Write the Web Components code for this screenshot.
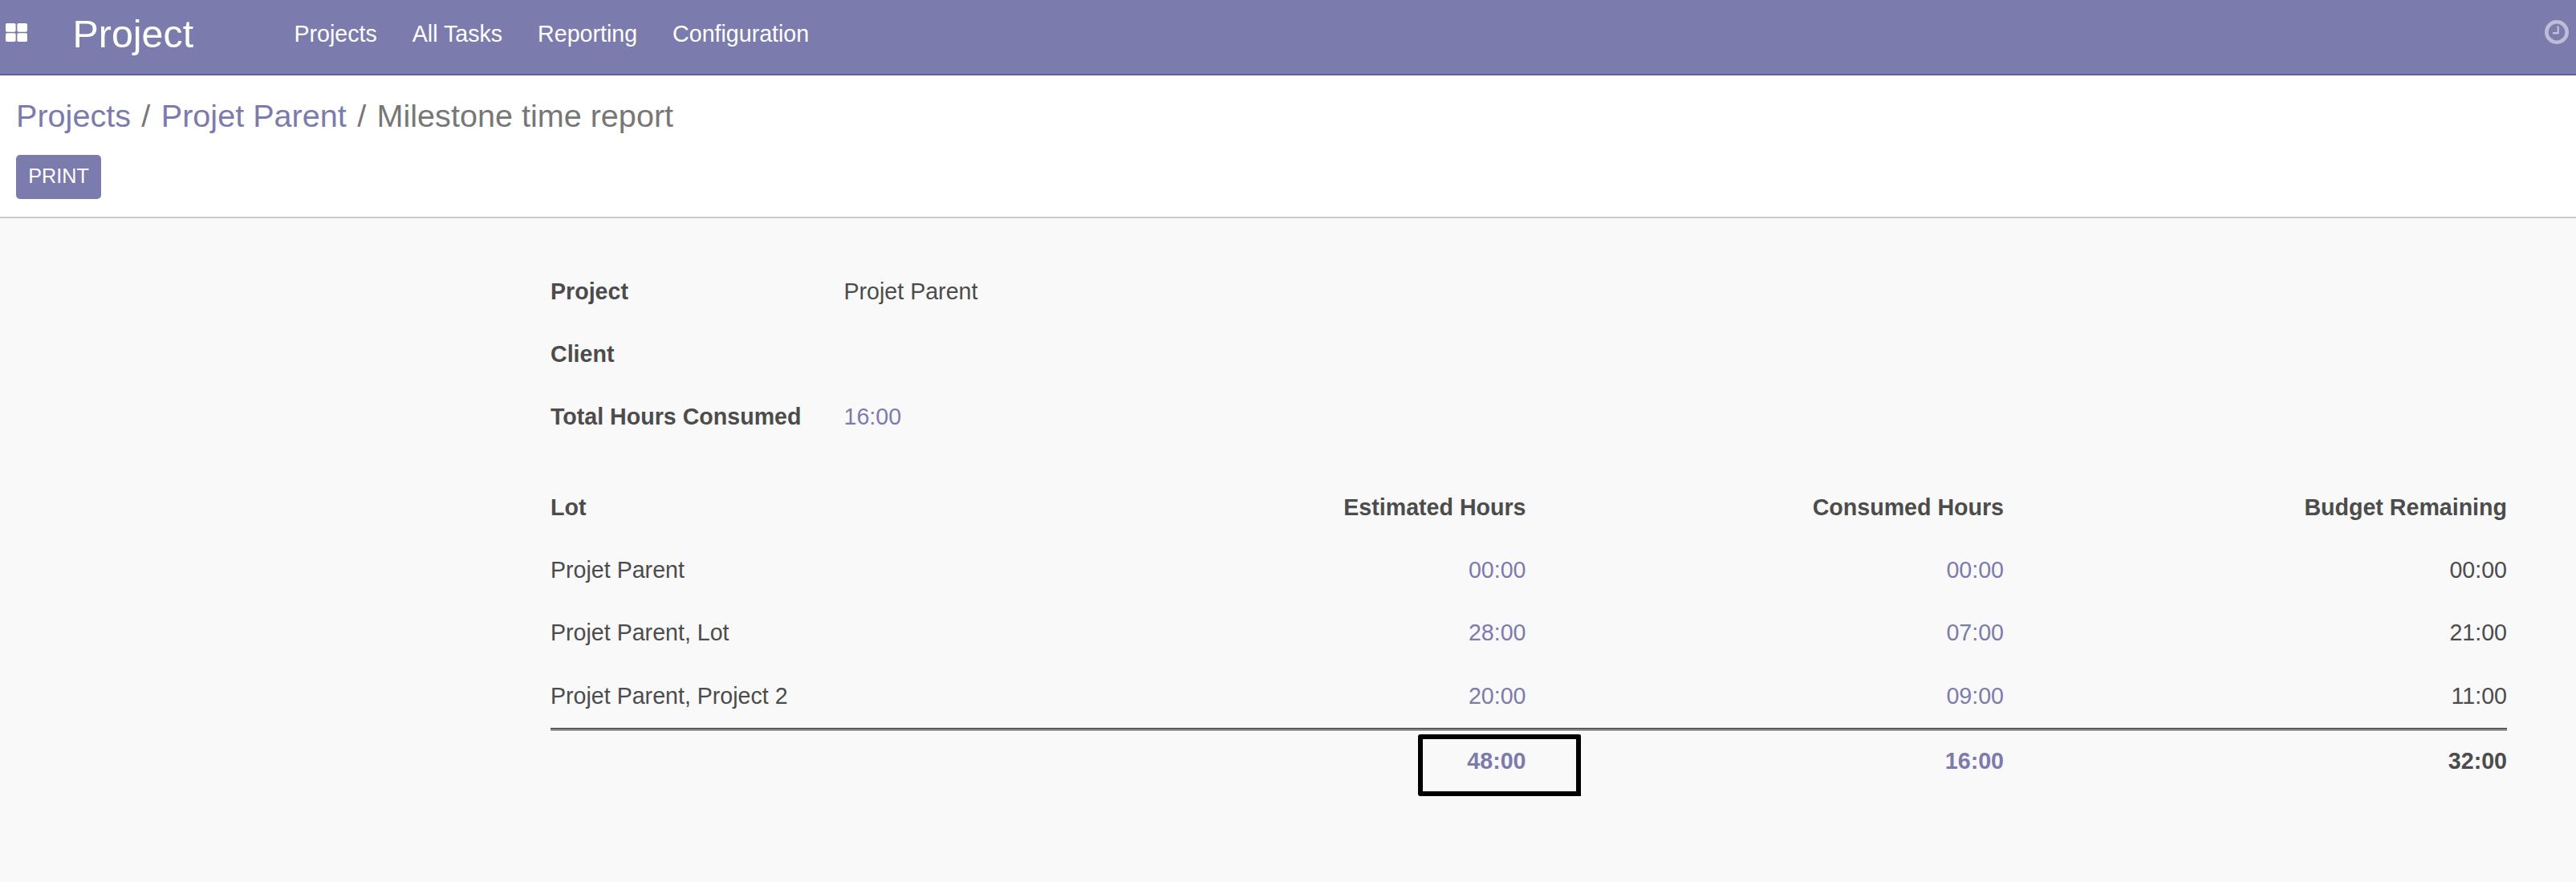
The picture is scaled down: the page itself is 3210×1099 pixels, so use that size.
<!DOCTYPE html>
<html lang="en">
<head>
<meta charset="utf-8">
<title>Milestone time report</title>
<style>
  html, body { margin: 0; height: 100%; }
  body { background: #f9f9f9; color: #4c4c4c; font: 28.6px/42px "Liberation Sans", Arial, sans-serif; overflow: hidden; }
</style>
</head>
<body>
<report-app></report-app>
<script>
const define = (name, html) => {
  const template = document.createElement('template');
  template.innerHTML = html;
  customElements.define(name, class extends HTMLElement {
    constructor() {
      super();
      this.attachShadow({ mode: 'open' }).append(template.content.cloneNode(true));
    }
  });
};

define('apps-icon', `
<style>:host{display:block;width:27px;height:23px}svg{display:block}</style>
<svg width="27" height="23" fill="#fff"><rect width="12.6" height="10.8" rx="1.8"/><rect x="14.4" width="12.6" height="10.8" rx="1.8"/><rect y="12.2" width="12.6" height="10.8" rx="1.8"/><rect x="14.4" y="12.2" width="12.6" height="10.8" rx="1.8"/></svg>`);

define('clock-icon', `
<style>:host{display:block;width:30px;height:30px}svg{display:block}</style>
<svg width="30" height="30" fill="none" stroke="#bebdd6"><circle cx="15" cy="15" r="12.7" stroke-width="4.6"/><path d="M16.7 7.5V16.2H10" stroke-width="2.4" stroke-linejoin="round"/></svg>`);

define('nav-bar', `
<style>
:host{display:flex;align-items:flex-start;box-sizing:border-box;height:94px;background:#7c7bad;border-bottom:2px solid #5f5e97;color:#fff;padding:0 9px 0 7px}
apps-icon{margin-top:29px}
.brand{font-size:48.4px;line-height:54px;margin:15px 0 0 56.5px;width:276px}
nav{display:flex;gap:44px;margin-top:21px;flex:1}
clock-icon{margin-top:25px}
</style>
<apps-icon></apps-icon><div class="brand"><slot name="brand"></slot></div><nav><slot></slot></nav><clock-icon></clock-icon>`);

define('action-button', `
<style>:host{display:block}button{display:block;box-sizing:border-box;width:106px;height:55px;border:0;border-radius:5px;background:#7c7bad;color:#fff;font:25.2px/30px "Liberation Sans",Arial,sans-serif;padding:0 0 4px;text-align:center;text-transform:uppercase}</style>
<button><slot></slot></button>`);

define('control-panel', `
<style>
:host{display:block;box-sizing:border-box;height:178px;background:#fff;border-bottom:2px solid #ccc;padding:20px 20px 0}
.crumbs{display:flex;font-size:39.6px;line-height:60px;height:79px;color:#777;white-space:pre}
a{color:#7c7bad}.sep{padding:0 13.4px}
</style>
<div class="crumbs"><a>Projects</a><span class="sep">/</span><a>Projet Parent</a><span class="sep">/</span><span>Milestone time report</span></div>
<action-button>Print</action-button>`);

define('info-row', `
<style>:host{display:grid;grid-template-columns:365.5px 1fr;height:78px}.label{font-weight:700}</style>
<span class="label"><slot name="label"></slot></span><span><slot></slot></span>`);

define('lot-row', `
<style>
:host{display:grid;grid-template-columns:619.5px 596px 595.5px 627px;height:78px}
:host([heading]),:host([total]){font-weight:700}
:host([total]){border-top:3px double #000;padding-top:17px}
.n{text-align:right}
</style>
<span><slot name="lot"></slot></span><span class="n"><slot name="est"></slot></span><span class="n"><slot name="used"></slot></span><span class="n"><slot name="left"></slot></span>`);

define('value-marker', `
<style>
:host{display:inline-block;position:relative}
i{position:absolute;left:-61.2px;top:-12px;width:191px;height:65px;border:6px solid #000;border-radius:3px 2px 0 3px}
</style>
<slot></slot><i></i>`);

define('report-app', `
<style>
:host{display:block}
a{color:#7c7bad}
main{display:block;margin:70px 86px 0 686px}
section.lots{margin-top:35px}
.tall{height:79px}
.last{height:61px}
</style>
<nav-bar><span slot="brand">Project</span><span>Projects</span><span>All Tasks</span><span>Reporting</span><span>Configuration</span></nav-bar>
<control-panel></control-panel>
<main>
<section>
<info-row><span slot="label">Project</span>Projet Parent</info-row>
<info-row><span slot="label">Client</span></info-row>
<info-row><span slot="label">Total Hours Consumed</span><a>16:00</a></info-row>
</section>
<section class="lots">
<lot-row heading><span slot="lot">Lot</span><span slot="est">Estimated Hours</span><span slot="used">Consumed Hours</span><span slot="left">Budget Remaining</span></lot-row>
<lot-row><span slot="lot">Projet Parent</span><a slot="est">00:00</a><a slot="used">00:00</a><span slot="left">00:00</span></lot-row>
<lot-row class="tall"><span slot="lot">Projet Parent, Lot</span><a slot="est">28:00</a><a slot="used">07:00</a><span slot="left">21:00</span></lot-row>
<lot-row class="last"><span slot="lot">Projet Parent, Project 2</span><a slot="est">20:00</a><a slot="used">09:00</a><span slot="left">11:00</span></lot-row>
<lot-row total><a slot="est"><value-marker>48:00</value-marker></a><a slot="used">16:00</a><span slot="left">32:00</span></lot-row>
</section>
</main>`);
</script>
</body>
</html>
